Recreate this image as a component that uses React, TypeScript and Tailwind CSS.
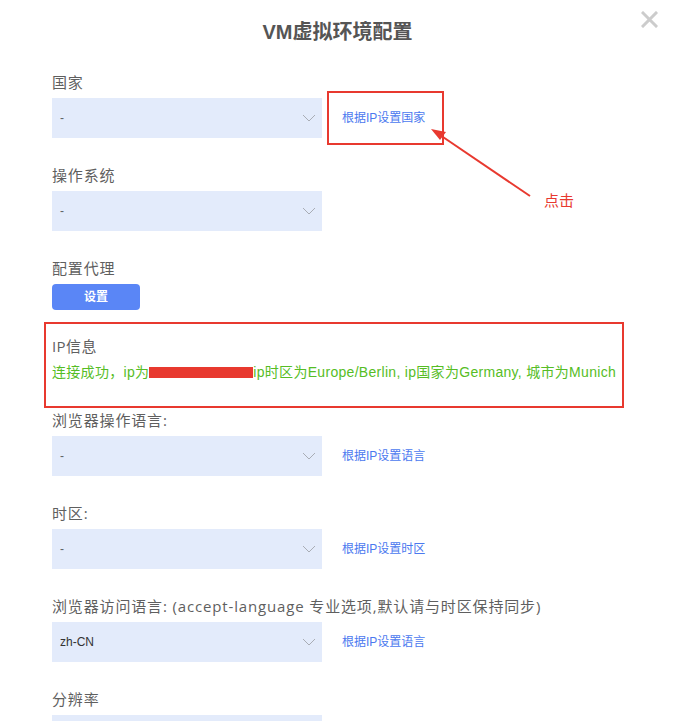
import React from "react";

const font = { fontFamily: '"Liberation Sans", "Noto Sans CJK SC", sans-serif' };
const labelFont = { fontFamily: '"Open Sans", "Noto Sans CJK SC", sans-serif' };

function Chevron() {
  return (
    <svg width="14" height="8" viewBox="0 0 14 8" className="shrink-0">
      <path d="M1 1 L7 7 L13 1" fill="none" stroke="#a9adb5" strokeWidth="1" />
    </svg>
  );
}

function Select({ value = "-", dark = false }: { value?: string; dark?: boolean }) {
  return (
    <div className="w-[270px] h-[40px] bg-[#e3ebfb] flex items-center justify-between pl-[8px] pr-[6px]">
      <span className={`text-[12px] ${dark ? "text-[#333]" : "text-[#606266]"}`}>{value}</span>
      <Chevron />
    </div>
  );
}

function Label({ children }: { children: React.ReactNode }) {
  return (
    <div className="text-[15px] leading-[22px] text-[#5f5f5f] mb-[5px] tracking-[0.85px]" style={labelFont}>
      {children}
    </div>
  );
}

function Link({ children }: { children: React.ReactNode }) {
  return <span className="text-[12px] text-[#4b79ef] ml-[20px]">{children}</span>;
}

export default function App() {
  return (
    <div className="relative w-[675px] h-[721px] overflow-hidden bg-white" style={font}>
      <div className="h-[64px] flex items-center justify-center">
        <h1 className="text-[20px] font-bold text-[#555] leading-[24px]">VM虚拟环境配置</h1>
      </div>
      <div className="absolute right-[17px] top-[11px]">
        <svg width="17" height="17" viewBox="0 0 17 17">
          <path d="M2 2 L15 15 M15 2 L2 15" stroke="#cccccc" strokeWidth="3" strokeLinecap="square" />
        </svg>
      </div>

      <div className="pl-[52px] pt-[7px]">
        <div className="mb-[26px]">
          <Label>国家</Label>
          <div className="flex items-center">
            <Select />
            <Link>根据IP设置国家</Link>
          </div>
        </div>

        <div className="mb-[26px]">
          <Label>操作系统</Label>
          <Select />
        </div>

        <div className="mb-[25px]">
          <Label>配置代理</Label>
          <button className="w-[88px] h-[26px] rounded-[4px] bg-[#5a86f6] text-white text-[12px] font-bold">设置</button>
        </div>

        <div className="mb-[26px]">
          <div className="text-[15px] leading-[22px] text-[#5f5f5f] mb-[4px] tracking-[0.4px]" style={labelFont}>IP信息</div>
          <div className="text-[14px] leading-[22px] text-[#56bd25] flex items-center whitespace-nowrap tracking-[0.3px]">
            <span>连接成功，ip为</span>
            <span className="inline-block w-[104px] h-[11px] bg-[#e8392f]" />
            <span>ip时区为Europe/Berlin, ip国家为Germany, 城市为Munich</span>
          </div>
        </div>

        <div className="mb-[26px]">
          <Label>浏览器操作语言:</Label>
          <div className="flex items-center">
            <Select />
            <Link>根据IP设置语言</Link>
          </div>
        </div>

        <div className="mb-[26px]">
          <Label>时区:</Label>
          <div className="flex items-center">
            <Select />
            <Link>根据IP设置时区</Link>
          </div>
        </div>

        <div className="mb-[26px]">
          <Label>浏览器访问语言: (accept-language 专业选项,默认请与时区保持同步)</Label>
          <div className="flex items-center">
            <Select value="zh-CN" dark />
            <Link>根据IP设置语言</Link>
          </div>
        </div>

        <div className="mb-[26px]">
          <Label>分辨率</Label>
          <Select value="" />
        </div>
      </div>

      {/* annotations */}
      <div className="absolute left-[327px] top-[91px] w-[117px] h-[54px] border-2 border-[#e8392f]" />
      <div className="absolute left-[44px] top-[322px] w-[580px] h-[86px] border-2 border-[#e8392f]" />
      <svg className="absolute left-0 top-0" width="675" height="721" viewBox="0 0 675 721">
        <line x1="530" y1="196" x2="440" y2="135" stroke="#e8392f" strokeWidth="2" />
        <path d="M431 129 L446 132 L440 140 Z" fill="#e8392f" />
      </svg>
      <div className="absolute left-[544px] top-[191px] text-[15px] leading-[20px] text-[#e8392f]">点击</div>
    </div>
  );
}
